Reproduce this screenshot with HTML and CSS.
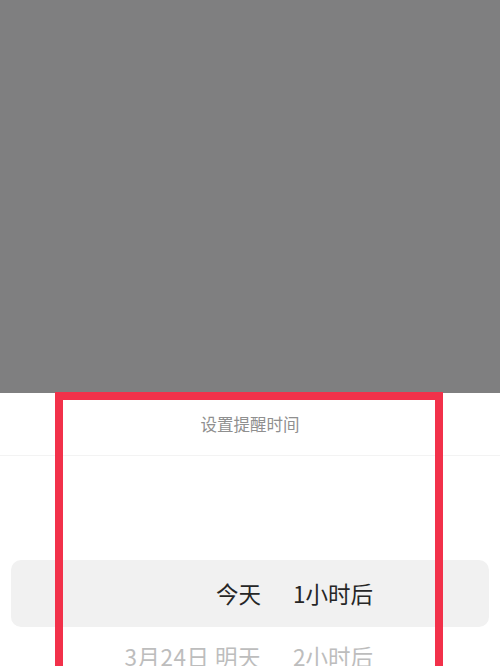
FILE: index.html
```html
<!DOCTYPE html>
<html lang="zh-CN">
<head>
<meta charset="utf-8">
<link rel="stylesheet" href="styles.css">
</head>
<body>
<div class="page">
  <div class="backdrop"></div>
  <div class="sheet">
    <div class="header">设置提醒时间</div>
    <div class="picker">
      <div class="row selected">
        <span class="day">今天</span>
        <span class="time">1小时后</span>
      </div>
      <div class="row">
        <span class="day">3月24日 明天</span>
        <span class="time">2小时后</span>
      </div>
    </div>
  </div>
  <div class="highlight"></div>
</div>
</body>
</html>
```
FILE: styles.css
```css
html, body {
  margin: 0;
  padding: 0;
  background: #ffffff;
}
.page {
  position: relative;
  width: 500px;
  height: 666px;
  overflow: hidden;
  font-family: "Noto Sans CJK SC", "Noto Sans", sans-serif;
}
.backdrop {
  height: 393px;
  background: #7f7f80;
}
.sheet {
  background: #ffffff;
}
.header {
  height: 62px;
  display: flex;
  align-items: center;
  justify-content: center;
  font-size: 16.5px;
  color: #8f8f8f;
  border-bottom: 1px solid #f3f3f3;
}
.picker {
  padding-top: 104px;
}
.row {
  display: grid;
  grid-template-columns: 250px 1fr;
  column-gap: 32px;
  align-items: center;
  height: 58px;
  margin: 0 11px;
  font-size: 22.5px;
  line-height: 1.2;
  color: #bdbdbd;
}
.row.selected {
  height: 67px;
  background: #f1f1f1;
  border-radius: 10px;
  color: #262626;
}
.day {
  text-align: right;
  letter-spacing: 0.5px;
}
.selected .day {
  letter-spacing: 0;
}
.time {
  text-align: left;
}
.highlight {
  position: absolute;
  left: 55px;
  top: 392px;
  width: 372px;
  height: 300px;
  border: 8px solid #f2314a;
}
```
